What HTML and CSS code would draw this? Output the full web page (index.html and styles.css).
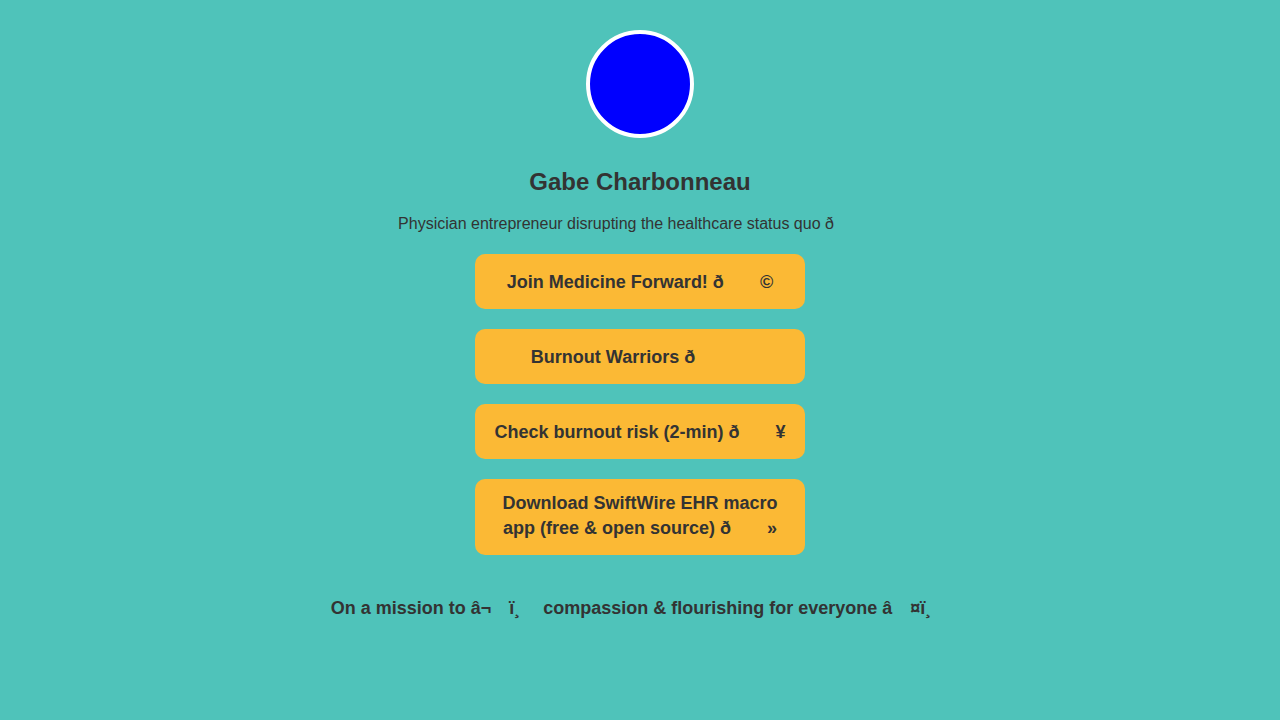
FILE: index.html
```html
<!DOCTYPE html>
<html lang="en">
<head>
<meta charset="utf-8">
<title>Gabe Charbonneau</title>
<link rel="stylesheet" href="styles.css">
</head>
<body>
<main class="profile">
  <div class="avatar"></div>
  <h1 class="name">Gabe Charbonneau</h1>
  <p class="bio">Physician entrepreneur disrupting the healthcare status quo ð<span class="cc"></span><span class="cc"></span><span class="cc"></span></p>
  <nav class="links">
    <a class="link" href="#">Join Medicine Forward! ð<span class="cc"></span><span class="cc"></span>©</a>
    <a class="link" href="#">Burnout Warriors ð<span class="cc"></span><span class="cc"></span><span class="cc"></span></a>
    <a class="link" href="#">Check burnout risk (2-min) ð<span class="cc"></span><span class="cc"></span>¥</a>
    <a class="link" href="#">Download SwiftWire EHR macro app (free &amp; open source) ð<span class="cc"></span><span class="cc"></span>»</a>
  </nav>
  <p class="mission">On a mission to â¬<span class="cc"></span>ï¸<span class="cc"></span> compassion &amp; flourishing for everyone â<span class="cc"></span>¤ï¸<span class="cc"></span></p>
</main>
</body>
</html>
```
FILE: styles.css
```css
html, body {
  margin: 0;
  padding: 0;
}
body {
  background: #4fc3ba;
  color: #333333;
  font-family: "Liberation Sans", Arial, Helvetica, sans-serif;
  min-height: 720px;
}
.profile {
  display: flex;
  flex-direction: column;
  align-items: center;
  padding-top: 30px;
}
.avatar {
  width: 100px;
  height: 100px;
  border-radius: 50%;
  background: #0000ff;
  border: 4px solid #ffffff;
}
.name {
  margin: 30px 0 0;
  font-size: 24px;
  font-weight: bold;
  line-height: 28px;
}
.bio {
  margin: 17px 0 0;
  font-size: 16px;
  line-height: 18px;
  text-align: center;
}
.links {
  display: flex;
  flex-direction: column;
  gap: 20px;
  margin-top: 21px;
}
.link {
  box-sizing: border-box;
  width: 330px;
  padding: 14px 16px;
  border-radius: 10px;
  background: #fbb935;
  color: #333333;
  text-decoration: none;
  text-align: center;
  font-size: 18px;
  font-weight: bold;
}
.cc {
  display: inline-block;
  width: 1em;
  height: 1.5em;
  vertical-align: -0.39em;
}
.bio .cc {
  height: 1em;
  vertical-align: 0;
}
.mission {
  margin: 39px 0 0;
  font-size: 18px;
  font-weight: bold;
  text-align: center;
}
```
